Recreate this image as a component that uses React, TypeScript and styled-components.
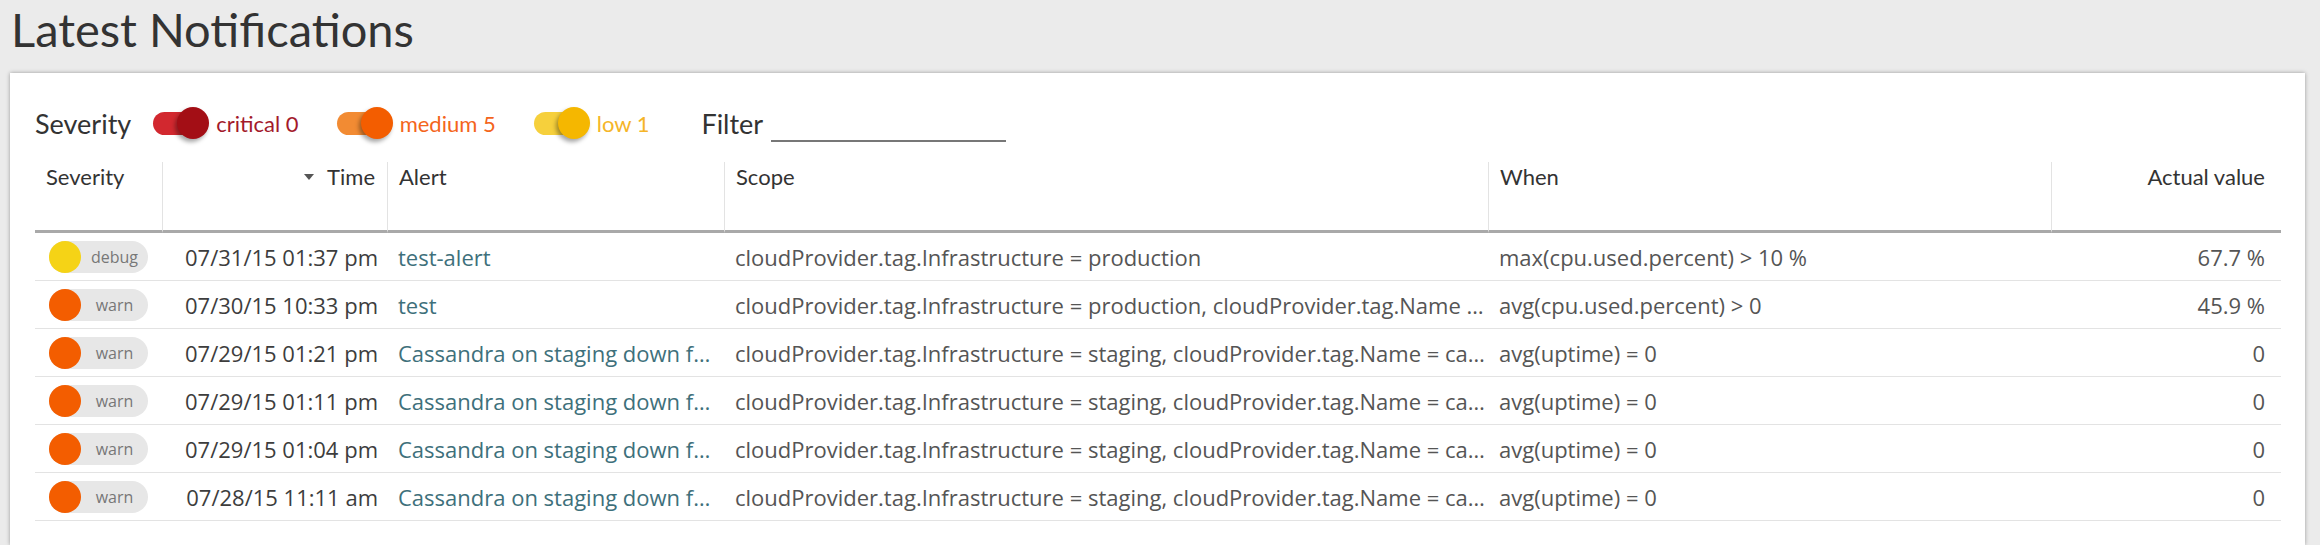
import React from 'react'
import styled, { createGlobalStyle } from 'styled-components'

const GlobalStyle = createGlobalStyle`
  html, body {
    margin: 0;
    padding: 0;
    background: #ebebeb;
    overflow: hidden;
  }
`

const Page = styled.div`
  height: 545px;
  display: flex;
  flex-direction: column;
`

const Title = styled.h1`
  margin: 0 0 15px 11px;
  font-family: Lato, 'Liberation Sans', sans-serif;
  font-weight: 400;
  font-size: 47px;
  line-height: 58px;
  color: #333;
`

const Panel = styled.div`
  flex: 1;
  margin: 0 15px 0 10px;
  padding: 0 24px 0 25px;
  background: #fff;
  box-shadow: 0 0 4px rgba(0, 0, 0, 0.35);
`

const FilterBar = styled.div`
  display: flex;
  align-items: center;
  height: 46px;
  padding-top: 27px;
  margin-bottom: 16px;
  font-family: Lato, 'Liberation Sans', sans-serif;
`

const BarLabel = styled.span<{ $gap?: number }>`
  font-size: 27px;
  color: #333;
  margin-right: ${(p) => p.$gap ?? 22}px;
`

const Toggle = styled.span`
  display: flex;
  align-items: center;
  margin-right: 38px;
`

const Switch = styled.span`
  position: relative;
  width: 56px;
  height: 32px;
  margin-right: 7px;
`

const Track = styled.span<{ $color: string }>`
  position: absolute;
  left: 0;
  top: 5px;
  width: 50px;
  height: 23px;
  border-radius: 12px;
  background: ${(p) => p.$color};
`

const Knob = styled.span<{ $color: string }>`
  position: absolute;
  right: 0;
  top: 0;
  width: 32px;
  height: 32px;
  border-radius: 50%;
  background: ${(p) => p.$color};
  box-shadow: -2px 3px 4px rgba(0, 0, 0, 0.35);
`

const ToggleText = styled.span<{ $color: string }>`
  font-size: 22px;
  color: ${(p) => p.$color};
`

const FilterGroup = styled.label`
  display: flex;
  align-items: center;
  margin-left: 14px;
`

const FilterInput = styled.input`
  width: 235px;
  height: 30px;
  margin-left: 8px;
  margin-top: 6px;
  padding: 0;
  border: none;
  border-bottom: 2px solid #777;
  outline: none;
  background: transparent;
  font-family: Lato, 'Liberation Sans', sans-serif;
  font-size: 22px;
`

const Table = styled.table`
  width: 100%;
  table-layout: fixed;
  border-collapse: separate;
  border-spacing: 0;
`

const Th = styled.th<{ $align?: string; $pr?: number }>`
  box-sizing: border-box;
  height: 71px;
  padding: 2px ${(p) => p.$pr ?? 11}px 0 11px;
  vertical-align: top;
  text-align: ${(p) => p.$align ?? 'left'};
  font-family: Lato, 'Liberation Sans', sans-serif;
  font-weight: 400;
  font-size: 22px;
  line-height: 26px;
  color: #333;
  border-bottom: 3px solid #a9a9a9;
  & + & {
    border-left: 1px solid #e3e3e3;
  }
`

const SortArrow = styled.svg`
  width: 10px;
  height: 6px;
  margin-right: 13px;
  vertical-align: middle;
  position: relative;
  top: -2px;
`

const Td = styled.td<{ $align?: string; $pr?: number; $color?: string }>`
  box-sizing: border-box;
  height: 48px;
  padding: 0 ${(p) => p.$pr ?? 11}px 0 11px;
  vertical-align: middle;
  text-align: ${(p) => p.$align ?? 'left'};
  white-space: nowrap;
  overflow: hidden;
  font-family: 'Open Sans', 'Liberation Sans', sans-serif;
  font-size: 22px;
  color: ${(p) => p.$color ?? '#555'};
  border-bottom: 1px solid #e3e3e3;
`

const Pill = styled.span`
  display: flex;
  align-items: center;
  width: 99px;
  height: 32px;
  margin-left: 3px;
  border-radius: 16px;
  background: #e7e7e7;
`

const Dot = styled.span<{ $color: string }>`
  width: 32px;
  height: 32px;
  border-radius: 50%;
  background: ${(p) => p.$color};
`

const PillText = styled.span`
  flex: 1;
  text-align: center;
  font-family: 'Open Sans', 'Liberation Sans', sans-serif;
  font-size: 16px;
  color: #777;
`

const toggles = [
  { label: 'critical 0', track: '#d2282f', knob: '#a30e15', text: '#a31a2b' },
  { label: 'medium 5', track: '#f28b33', knob: '#f35d00', text: '#f4651b' },
  { label: 'low 1', track: '#f6d03c', knob: '#f5b700', text: '#f5b528' },
]

type Row = {
  level: 'debug' | 'warn'
  time: string
  alert: string
  scope: string
  when: string
  value: string
}

// texts as shown (already truncated by the list)
const stagingScope = 'cloudProvider.tag.Infrastructure = staging, cloudProvider.tag.Name = ca…'
const cassandra = 'Cassandra on staging down f…'

const rows: Row[] = [
  {
    level: 'debug',
    time: '07/31/15 01:37 pm',
    alert: 'test-alert',
    scope: 'cloudProvider.tag.Infrastructure = production',
    when: 'max(cpu.used.percent) > 10 %',
    value: '67.7 %',
  },
  {
    level: 'warn',
    time: '07/30/15 10:33 pm',
    alert: 'test',
    scope: 'cloudProvider.tag.Infrastructure = production, cloudProvider.tag.Name …',
    when: 'avg(cpu.used.percent) > 0',
    value: '45.9 %',
  },
  { level: 'warn', time: '07/29/15 01:21 pm', alert: cassandra, scope: stagingScope, when: 'avg(uptime) = 0', value: '0' },
  { level: 'warn', time: '07/29/15 01:11 pm', alert: cassandra, scope: stagingScope, when: 'avg(uptime) = 0', value: '0' },
  { level: 'warn', time: '07/29/15 01:04 pm', alert: cassandra, scope: stagingScope, when: 'avg(uptime) = 0', value: '0' },
  { level: 'warn', time: '07/28/15 11:11 am', alert: cassandra, scope: stagingScope, when: 'avg(uptime) = 0', value: '0' },
]

const levelColor = { debug: '#f5d316', warn: '#f35d00' }

export default function App() {
  return (
    <Page>
      <GlobalStyle />
      <Title>Latest Notifications</Title>
      <Panel>
        <FilterBar>
          <BarLabel>Severity</BarLabel>
          {toggles.map((t) => (
            <Toggle key={t.label}>
              <Switch>
                <Track $color={t.track} />
                <Knob $color={t.knob} />
              </Switch>
              <ToggleText $color={t.text}>{t.label}</ToggleText>
            </Toggle>
          ))}
          <FilterGroup>
            <BarLabel $gap={0}>Filter</BarLabel>
            <FilterInput />
          </FilterGroup>
        </FilterBar>
        <Table>
          <colgroup>
            <col style={{ width: 127 }} />
            <col style={{ width: 225 }} />
            <col style={{ width: 337 }} />
            <col style={{ width: 764 }} />
            <col style={{ width: 563 }} />
            <col style={{ width: 230 }} />
          </colgroup>
          <thead>
            <tr>
              <Th>Severity</Th>
              <Th $align="right" $pr={12}>
                <SortArrow viewBox="0 0 10 6">
                  <path d="M0 0 L10 0 L5 6 Z" fill="#555" />
                </SortArrow>
                Time
              </Th>
              <Th>Alert</Th>
              <Th>Scope</Th>
              <Th>When</Th>
              <Th $align="right" $pr={16}>Actual value</Th>
            </tr>
          </thead>
          <tbody>
            {rows.map((r, i) => (
              <tr key={i}>
                <Td>
                  <Pill>
                    <Dot $color={levelColor[r.level]} />
                    <PillText>{r.level}</PillText>
                  </Pill>
                </Td>
                <Td $align="right" $pr={9} $color="#3d3d3d">{r.time}</Td>
                <Td $color="#3e707b">{r.alert}</Td>
                <Td $pr={4}>{r.scope}</Td>
                <Td>{r.when}</Td>
                <Td $align="right" $pr={16}>{r.value}</Td>
              </tr>
            ))}
          </tbody>
        </Table>
      </Panel>
    </Page>
  )
}
